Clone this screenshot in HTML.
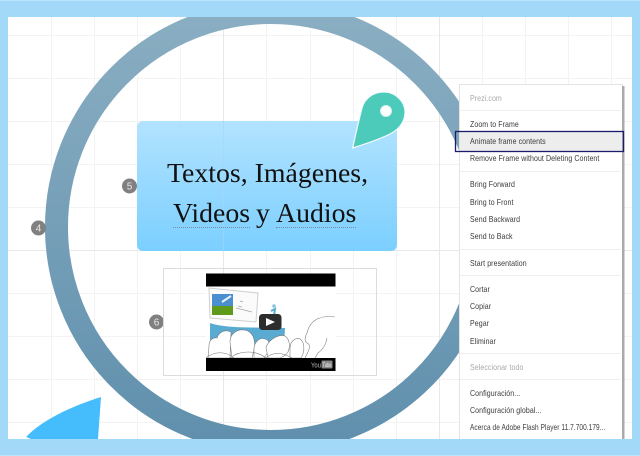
<!DOCTYPE html>
<html>
<head>
<meta charset="utf-8">
<style>
html,body{margin:0;padding:0;background:#a3d9f8}
body{width:640px;height:456px;position:relative;overflow:hidden;font-family:"Liberation Sans",sans-serif}
svg{position:absolute;left:0;top:0}
.mi{position:absolute;left:470px;font-family:"Liberation Sans",sans-serif;font-size:8.4px;line-height:10px;color:#3a3a3a;white-space:nowrap;transform:scaleX(.835);transform-origin:0 50%;letter-spacing:.1px;filter:blur(.25px)}
.d{color:#a8a8a8}
.sep{position:absolute;left:460px;width:161px;height:1px;background:#efefef}
.t{position:absolute;font-family:"Liberation Serif",serif;line-height:36px;color:#111;white-space:nowrap;filter:blur(.25px)}
.u{border-bottom:1px dotted #7d8a9c;line-height:26px;display:inline-block}
</style>
</head>
<body>
<svg width="640" height="456" viewBox="0 0 640 456">
<defs>
<linearGradient id="box" x1="0" y1="0" x2="0" y2="1"><stop offset="0" stop-color="#b2e3ff"/><stop offset="1" stop-color="#7bcfff"/></linearGradient>
<linearGradient id="ring" x1="0" y1="0" x2="0" y2="1"><stop offset="0" stop-color="#8aaec2"/><stop offset="1" stop-color="#6090ad"/></linearGradient>
<clipPath id="view"><rect x="8" y="17" width="624" height="422"/></clipPath>
<filter id="soft"><feGaussianBlur stdDeviation=".35"/></filter>
</defs>
<rect width="640" height="456" fill="#a3d9f8"/>
<rect x="0" y="0" width="640" height="1" fill="#b9e3fb"/>
<rect x="8" y="17" width="624" height="422" fill="#fff"/>
<g stroke="#f3f3f3" stroke-width="1">
<path d="M51.5 17V439M94.5 17V439M137.5 17V439M180.5 17V439M266.5 17V439M310.5 17V439M353.5 17V439M396.5 17V439M482.5 17V439M525.5 17V439M568.5 17V439M611.5 17V439"/>
<path d="M8 35.5H632M8 78.5H632M8 121.5H632M8 164.5H632M8 207.5H632M8 293.5H632M8 336.5H632M8 379.5H632M8 422.5H632"/>
</g>
<path d="M223.5 17V439M439.5 17V439M8 250.5H632" stroke="#e8e8e8" stroke-width="1"/>
<g clip-path="url(#view)">
<circle cx="271" cy="227" r="214.500" fill="none" stroke="url(#ring)" stroke-width="23"/>
<path d="M26 437C42 420 72 406 101 397L98 439H31Z" fill="#45bdfd"/>
</g>
<rect x="137" y="121" width="260" height="130" rx="6" fill="url(#box)"/>
<path d="M223.500 121V251" stroke="#a5d8f5" stroke-width="1" opacity=".6"/>
<path d="M352.700 148C355 137 359 120 362 108C365 97 375 91.500 385 92C396 92.500 405.500 102 405 113C404.500 123 398 130 390 134C378 140 365 144 352.700 148Z" fill="#4ccbbb" stroke="#f4fbfb" stroke-width="1.200" stroke-linejoin="round"/>
<circle cx="386" cy="111" r="5.500" fill="#fff" stroke="#d8f0ee" stroke-width="1"/>
<circle cx="129.500" cy="186" r="7.500" fill="#808080"/>
<circle cx="38.500" cy="228" r="7.500" fill="#808080"/>
<circle cx="156.500" cy="322" r="7.500" fill="#808080"/>
<text x="129.500" y="189.500" font-family="Liberation Sans" font-size="10" fill="#e8e8e8" text-anchor="middle">5</text>
<text x="38.500" y="231.500" font-family="Liberation Sans" font-size="10" fill="#e8e8e8" text-anchor="middle">4</text>
<text x="156.500" y="325.500" font-family="Liberation Sans" font-size="10" fill="#e8e8e8" text-anchor="middle">6</text>

<rect x="163.500" y="268.500" width="213" height="107" fill="none" stroke="#dcdcdc" stroke-width="1"/>
<rect x="206" y="274" width="129.500" height="97" fill="#fff"/>
<g filter="url(#soft)">
<path d="M209 288L258 293L256 322L210 318Z" fill="#fbfbfb" stroke="#cfcfcf" stroke-width="1"/>
<rect x="212" y="294" width="21" height="21" fill="#4c8fd0"/>
<rect x="212" y="306" width="21" height="9" fill="#5f9a1c"/>
<path d="M222 302L231 296" stroke="#e8f2fb" stroke-width="2"/>
<path d="M240 301L243 302M238 306L242 307M236 308L252 312" stroke="#a5a5a5" stroke-width=".8"/>
<path d="M210 323C228 329 258 327 285 328L284 345L210 345Z" fill="#5aabd2"/>
<path d="M271 311L275 309L274 316" stroke="#5aabd2" stroke-width="2" fill="none"/>
<circle cx="274" cy="306" r="1.800" fill="#8cc4dc"/>
<g fill="#fff" stroke="#777" stroke-width=".55">
<path d="M209 346C209 340 213 337 217 338C219 332 225 329 231 332L230 358H208Z"/>
<path d="M230 342C230 333 238 329 244 330C253 331 256 340 254 350L252 358H232Z"/>
<path d="M254 349C254 342 260 337 265 339C270 340 270 346 268 352L264 358H254Z"/>
<path d="M266 347C270 338 280 334 285 336C291 340 291 352 284 356L280 358H268Z"/>
<path d="M290 348C290 341 296 337 300 339C305 342 305 352 301 358H290Z"/>
<path d="M206 358C214 351 226 351 234 358M230 358C240 350 256 350 266 358M266 358C272 352 282 352 292 358" fill="none"/>
<path d="M305 358C309 350 312 345 307 343C304 341 305 337 307 333C309 325 313 320 320 318" fill="none"/>
<path d="M320 318C326 316 331 316 335 317" fill="none" stroke="#999"/>
<path d="M327 338C326 345 322 350 318 353L315 358" fill="none"/>
</g>
</g>
<rect x="206" y="273.500" width="129.500" height="13" fill="#000"/>
<rect x="206" y="358" width="129.500" height="13" fill="#000"/>
<rect x="259" y="314" width="22.500" height="16" rx="3.500" fill="#2d2d2d"/>
<path d="M266 318L275 322L266 326Z" fill="#fff"/>
<text x="311" y="367.500" font-family="Liberation Sans" font-size="7" fill="#bbb" textLength="10" lengthAdjust="spacingAndGlyphs">You</text>
<rect x="321.500" y="360.500" width="11" height="8" rx="1" fill="#888"/>
<text x="322.500" y="367" font-family="Liberation Sans" font-size="6" fill="#eee" textLength="9" lengthAdjust="spacingAndGlyphs">Tube</text>

<rect x="459.500" y="84.500" width="163" height="360" fill="#fff" stroke="#e4e4e4" stroke-width="1"/>
<rect x="622" y="86" width="2.500" height="353" fill="#aaa"/>
<rect x="460" y="131" width="162" height="20" fill="#ededed"/>
<rect x="455.500" y="131.500" width="168" height="20" fill="none" stroke="#1c1c6c" stroke-width="1.300"/>
<rect x="0" y="439" width="640" height="17" fill="#a3d9f8"/>
<rect x="632" y="17" width="8" height="422" fill="#a3d9f8"/>
<rect x="0" y="455" width="640" height="1" fill="#b9e3fb"/>
</svg>

<div class="t" style="left:167px;top:156px;font-size:27.800px">Textos, Imágenes,</div>
<div class="t" style="left:173px;top:195.500px;font-size:27.800px"><span class="u">Videos</span></div>
<div class="t" style="left:256px;top:195.500px;font-size:27.800px">y</div>
<div class="t" style="left:276px;top:195.500px;font-size:27.800px"><span class="u">Audios</span></div>

<div class="mi d" style="top:92.500px">Prezi.com</div>
<div class="sep" style="top:110px"></div>
<div class="mi" style="top:118.500px">Zoom to Frame</div>
<div class="mi" style="top:136px">Animate frame contents</div>
<div class="mi" style="top:153px">Remove Frame without Deleting Content</div>
<div class="sep" style="top:171px"></div>
<div class="mi" style="top:179px">Bring Forward</div>
<div class="mi" style="top:196.500px">Bring to Front</div>
<div class="mi" style="top:214px">Send Backward</div>
<div class="mi" style="top:231px">Send to Back</div>
<div class="sep" style="top:249px"></div>
<div class="mi" style="top:257.500px">Start presentation</div>
<div class="sep" style="top:275px"></div>
<div class="mi" style="top:283.500px">Cortar</div>
<div class="mi" style="top:301px">Copiar</div>
<div class="mi" style="top:318px">Pegar</div>
<div class="mi" style="top:335.500px">Eliminar</div>
<div class="sep" style="top:353px"></div>
<div class="mi d" style="top:361.500px">Seleccionar todo</div>
<div class="sep" style="top:379px"></div>
<div class="mi" style="top:387.500px">Configuración...</div>
<div class="mi" style="top:405px">Configuración global...</div>
<div class="mi" style="top:422px;transform:scaleX(.775)">Acerca de Adobe Flash Player 11.7.700.179...</div>
</body>
</html>
